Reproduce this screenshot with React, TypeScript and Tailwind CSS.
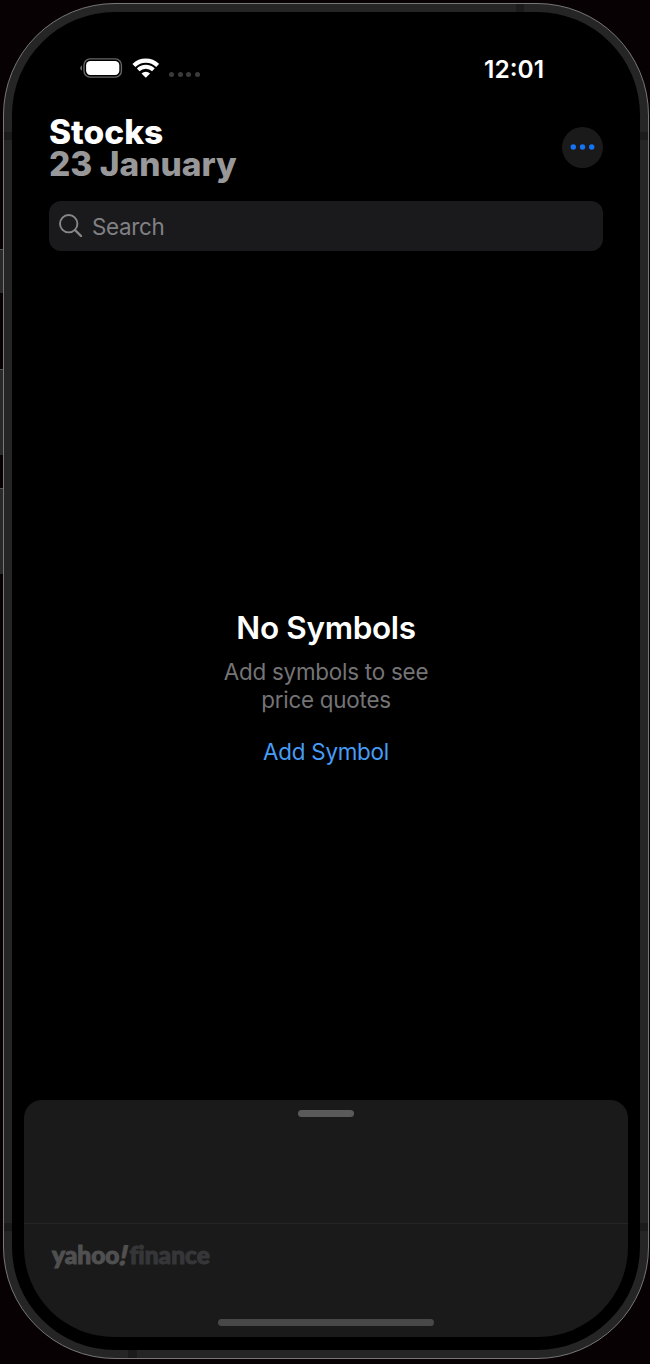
const sideButtons = [
  "mt-[249px] h-[44px]",
  "mt-[76px] h-[86px]",
  "mt-[33px] h-[86px]",
];

function StatusBar() {
  return (
    <div className="flex h-[24px] items-center justify-between pl-[31px] pr-[59px]">
      <div className="flex items-center">
        <svg width="43" height="20" viewBox="0 0 43 20" fill="none">
          <path d="M1.9 7.2Q-1.5 10 1.9 12.8Z" fill="#777" />
          <rect x="4" y=".9" width="37.4" height="18.2" rx="6" stroke="#666" strokeWidth="1.4" />
          <rect x="6.1" y="3.1" width="33.2" height="13.8" rx="4.2" fill="#fff" />
        </svg>
        <svg className="ml-[9px]" width="27" height="20" viewBox="0 0 27 20" fill="none">
          <path d="M1.9 7.4a17 17 0 0 1 23.8 0" stroke="#fff" strokeWidth="4.2" />
          <path d="M6.2 11.9a10.8 10.8 0 0 1 15.2 0" stroke="#fff" strokeWidth="3.8" />
          <path d="M9.5 15.4a6.2 6.2 0 0 1 8.6 0L13.8 19.8Z" fill="#fff" />
        </svg>
        <div className="ml-[10px] flex gap-[3.5px] pt-[13px]">
          <i className="size-[5px] rounded-full bg-[#3b3b3b]" />
          <i className="size-[5px] rounded-full bg-[#3b3b3b]" />
          <i className="size-[5px] rounded-full bg-[#3b3b3b]" />
          <i className="size-[5px] rounded-full bg-[#3b3b3b]" />
        </div>
      </div>
      <span className="pt-[1px] text-[24.5px] leading-[24px] font-semibold text-white">12:01</span>
    </div>
  );
}

function Header() {
  return (
    <div className="mt-[36px] flex justify-between">
      <h1 className="text-[33.5px] leading-[32px] font-extrabold tracking-[0px] whitespace-nowrap text-white">
        Stocks
        <span className="block text-[#98989a]">23 January</span>
      </h1>
      <button className="mt-[10.5px] flex size-[41px] items-center justify-center rounded-full bg-[#1a1a1b]">
        <svg width="25" height="6" viewBox="0 0 25 6" fill="#1574f5">
          <circle cx="3.3" cy="3" r="2.7" />
          <circle cx="12.5" cy="3" r="2.7" />
          <circle cx="21.7" cy="3" r="2.7" />
        </svg>
      </button>
    </div>
  );
}

function SearchField() {
  return (
    <div className="mt-[21px] flex h-[49.5px] items-center rounded-[12px] bg-[#1a1a1c] pl-[10px]">
      <svg width="24" height="24" viewBox="0 0 24 24" fill="none" stroke="#88888b">
        <circle cx="9.7" cy="9.7" r="8.7" strokeWidth="1.9" />
        <path d="m16 16 6 6" strokeWidth="2.4" strokeLinecap="round" />
      </svg>
      <span className="ml-[9px] pt-[2px] text-[22.4px] tracking-[-0.3px] text-[#818184]">Search</span>
    </div>
  );
}

function EmptyState() {
  return (
    <div className="mt-[358.5px] flex flex-col items-center text-center">
      <h2 className="text-[31.5px] leading-[38px] font-semibold tracking-[-0.35px] text-white">No Symbols</h2>
      <p className="mt-[11px] text-[22.4px] leading-[28px] tracking-[-0.23px] text-[#747476]">
        Add symbols to see
        <br />
        price quotes
      </p>
      <button className="mt-[24px] text-[22.4px] leading-[28px] tracking-[-0.23px] text-[#469cf7]">Add Symbol</button>
    </div>
  );
}

function NewsSheet() {
  return (
    <div className="mx-[12px] mb-[13px] flex h-[237px] flex-col overflow-hidden rounded-t-[18px] rounded-b-[90px] bg-[#1a1a1a]">
      <div className="flex h-[124px] justify-center border-b border-[#252525] pt-[10px]">
        <div className="h-[7px] w-[56px] rounded-full bg-[#5a5a5a]" />
      </div>
      <div className="flex flex-1 flex-col justify-between pt-[17px] pb-[11px]">
        <div className="flex pl-[28px] font-['Lato',sans-serif] text-[24.5px] leading-[28px] font-black [font-variant-ligatures:none]">
          <span className="text-[#505051] [-webkit-text-stroke:1px_#505051]">yahoo</span>
          <span className="w-[10px] -skew-x-12 text-center text-[27px] text-[#505051] [-webkit-text-stroke:1px_#505051]">!</span>
          <span className="text-[#363639] [-webkit-text-stroke:1px_#363639]">finance</span>
        </div>
        <div className="h-[7px] w-[216px] self-center rounded-full bg-[#484848]" />
      </div>
    </div>
  );
}

export default function App() {
  return (
    <div className="relative flex h-[1364px] w-[650px] bg-[#080103] font-['Inter',sans-serif]">
      <div className="w-[3px] shrink-0">
        {sideButtons.map((c) => (
          <div key={c} className={`${c} border-t border-[#555] bg-[#292929]`} />
        ))}
      </div>
      <div className="mt-[3px] h-[1356px] w-[646px] rounded-[112px] border border-[#777] bg-[#252525] p-[8px]">
        <div className="flex h-[1338px] w-[628px] flex-col overflow-hidden rounded-[103px] bg-black">
          <div className="px-[37px] pt-[44px]">
            <StatusBar />
            <Header />
            <SearchField />
            <EmptyState />
          </div>
          <div className="mt-auto">
            <NewsSheet />
          </div>
        </div>
      </div>
      <i className="absolute top-[4px] left-[516px] h-[8px] w-[8px] bg-[#1b1b1b]" />
      <i className="absolute top-[132px] left-[4px] h-[8px] w-[8px] bg-[#1b1b1b]" />
      <i className="absolute top-[132px] left-[640px] h-[8px] w-[8px] bg-[#1b1b1b]" />
      <i className="absolute top-[1223px] left-[4px] h-[8px] w-[8px] bg-[#1b1b1b]" />
      <i className="absolute top-[1223px] left-[640px] h-[8px] w-[8px] bg-[#1b1b1b]" />
      <i className="absolute top-[1350px] left-[128px] h-[8px] w-[9px] bg-[#1b1b1b]" />
    </div>
  );
}
